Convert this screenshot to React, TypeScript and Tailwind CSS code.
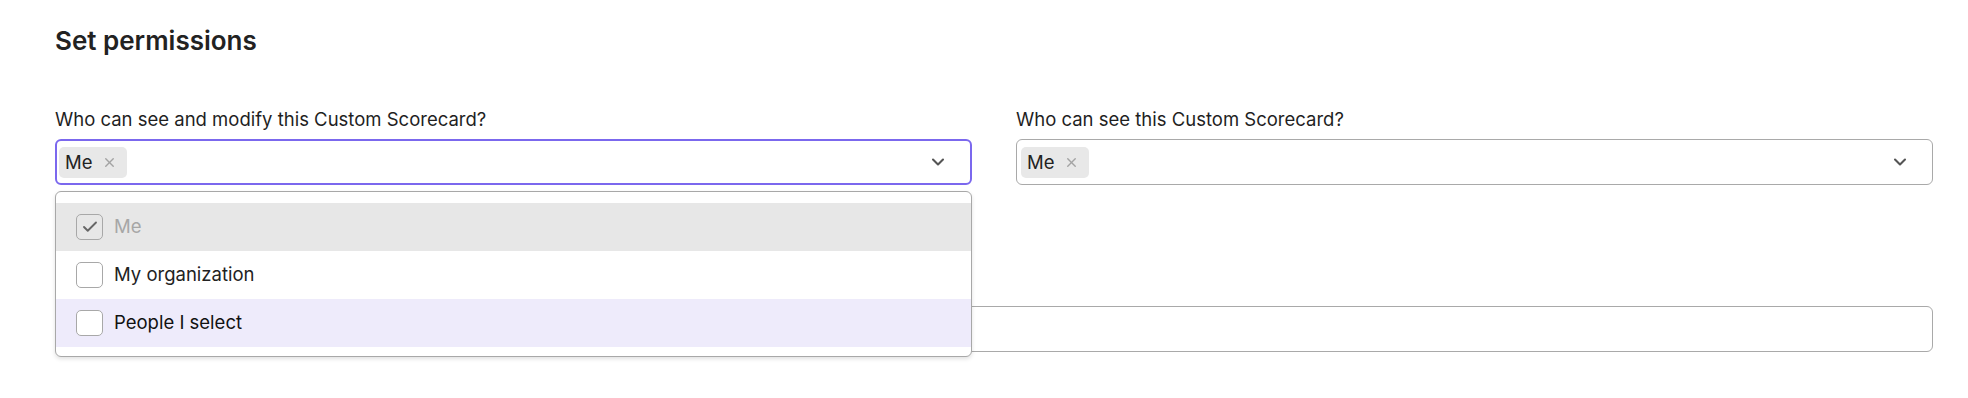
import { ChevronDown, X, Check } from "lucide-react";

// Permissions section with an open multi-select dropdown

interface Option {
  label: string;
  checked: boolean;
  disabled?: boolean;
  highlighted?: boolean;
}

const options: Option[] = [
  { label: "Me", checked: true, disabled: true },
  { label: "My organization", checked: false },
  { label: "People I select", checked: false, highlighted: true },
];

function Chip({ label }: { label: string }) {
  return (
    <div className="flex items-center h-[31px] rounded-[5px] bg-[#e8e8e8] pl-[6px] pr-[10px] gap-[9px]">
      <span className="text-[18.5px] leading-none text-[#222]">{label}</span>
      <X className="w-[15px] h-[15px] text-[#a3a3a3]" strokeWidth={2.25} />
    </div>
  );
}

function MultiSelect({ focused }: { focused?: boolean }) {
  return (
    <div
      className={`flex items-center justify-between h-[46px] rounded-[6px] bg-white ${
        focused ? "border-2 border-[#7b68ee] pl-[2px]" : "border-[1.5px] border-[#a9a9a9] pl-[4px]"
      } pr-[22px]`}
    >
      <Chip label="Me" />
      <ChevronDown className="w-[20px] h-[20px] text-[#555]" strokeWidth={2.5} />
    </div>
  );
}

function Checkbox({ checked, disabled }: { checked: boolean; disabled?: boolean }) {
  return (
    <div
      className={`flex items-center justify-center w-[27px] h-[26px] rounded-[5px] border border-[#a8a8a8] ${
        disabled ? "bg-transparent" : "bg-white"
      }`}
    >
      {checked && <Check className="w-[18px] h-[18px] text-[#666]" strokeWidth={2.5} />}
    </div>
  );
}

function Dropdown() {
  return (
    <div className="absolute left-0 right-0 top-[calc(100%+6px)] z-10 bg-white border border-[#a8a8a8] rounded-[6px] shadow-[0_2px_4px_rgba(0,0,0,0.12)] pt-[11px] pb-[9px]">
      {options.map((opt) => (
        <div
          key={opt.label}
          className={`flex items-center h-[48px] pl-[20px] gap-[11px] ${
            opt.disabled ? "bg-[#e7e7e7]" : opt.highlighted ? "bg-[#eeebfb]" : "bg-white"
          }`}
        >
          <Checkbox checked={opt.checked} disabled={opt.disabled} />
          <span
            className={`text-[18.5px] ${
              opt.disabled ? "text-[#a6a6a6]" : opt.highlighted ? "text-[#111]" : "text-[#222]"
            }`}
          >
            {opt.label}
          </span>
        </div>
      ))}
    </div>
  );
}

export default function App() {
  return (
    <div
      className="w-[1968px] h-[398px] bg-white pl-[55px] pr-[35px] pt-[25px] overflow-hidden"
      style={{ fontFamily: "Inter, 'Noto Sans', sans-serif" }}
    >
      <h2 className="text-[26px] leading-[32px] font-semibold text-[#222]">Set permissions</h2>

      <div className="grid grid-cols-2 gap-[44px] mt-[50px]">
        <div className="flex flex-col">
          <label className="text-[18.5px] leading-[24px] text-[#1f1f1f] mb-[8px]">
            Who can see and modify this Custom Scorecard?
          </label>
          <div className="relative">
            <MultiSelect focused />
            <Dropdown />
          </div>
        </div>
        <div className="flex flex-col">
          <label className="text-[18.5px] leading-[24px] text-[#1f1f1f] mb-[8px]">
            Who can see this Custom Scorecard?
          </label>
          <MultiSelect />
        </div>
      </div>

      <div className="mt-[89px]">
        <div className="h-[32px]" />
        <div className="h-[46px] rounded-[6px] border-[1.5px] border-[#a9a9a9] bg-white" />
      </div>
    </div>
  );
}
